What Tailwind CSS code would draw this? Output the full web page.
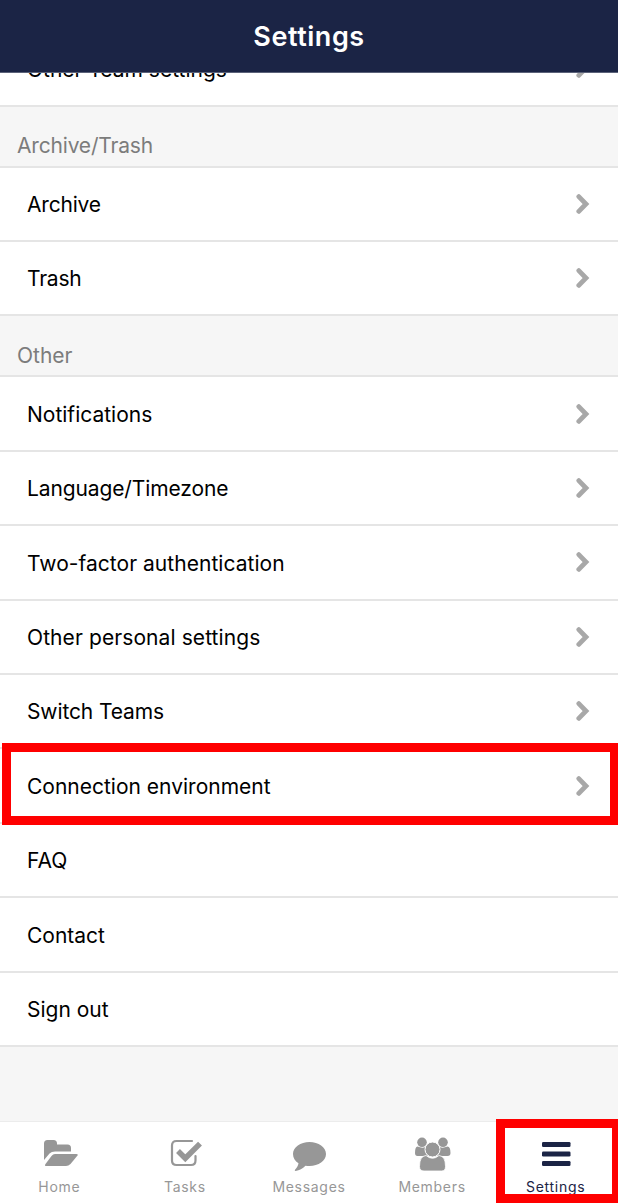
<!DOCTYPE html>
<html lang="en">
  <head>
    <meta charset="UTF-8" />
    <meta name="viewport" content="width=device-width, initial-scale=1.0" />
    <script src="https://cdn.jsdelivr.net/npm/@tailwindcss/browser@4"></script>
    <title>Settings</title>
  </head>
  <body class="bg-[#f6f6f6] font-['Inter',sans-serif] text-black">
    <!-- chevron shared by the list rows -->
    <svg class="hidden">
      <symbol id="chevron" viewBox="0 0 14 22">
        <path
          d="M2.800 2.600 L10 10 L2.800 17.400"
          fill="none"
          stroke="#a8a8a8"
          stroke-width="4.8"
          stroke-linecap="round"
        />
      </symbol>
    </svg>
    <div class="relative flex h-[1203px] w-[618px] flex-col overflow-hidden">
      <header
        class="z-10 flex h-[73px] shrink-0 items-center justify-center border-b border-[#5b6279] bg-[#1b2445] pt-0.5"
      >
        <h1 class="text-[27px] font-semibold tracking-[0.55px] text-white">Settings</h1>
      </header>

      <main class="-mt-[40.5px] flex grow flex-col text-[21px]">
        <div class="flex h-[74.5px] shrink-0 items-center justify-between border-b-2 border-[#e5e5e5] bg-white pt-px pr-7 pl-[27px]">
          Other Team settings
          <svg class="h-[22px] w-3.5"><use href="#chevron" /></svg>
        </div>
        <h2 class="flex h-[60.6px] shrink-0 items-end border-b-2 border-[#e5e5e5] pb-1 pl-[17px] tracking-[-0.18px] text-[#7c7c7c]">
          Archive/Trash
        </h2>
        <div class="flex h-[74.4px] shrink-0 items-center justify-between border-b-2 border-[#e5e5e5] bg-white pt-0.5 pr-7 pl-[27px]">
          <span class="tracking-[-0.2px]">Archive</span>
          <svg class="h-[22px] w-3.5"><use href="#chevron" /></svg>
        </div>
        <div class="flex h-[74.4px] shrink-0 items-center justify-between border-b-2 border-[#e5e5e5] bg-white pt-0.5 pr-7 pl-[27px]">
          <span class="tracking-[-0.2px]">Trash</span>
          <svg class="h-[22px] w-3.5"><use href="#chevron" /></svg>
        </div>
        <h2 class="flex h-[61px] shrink-0 items-end border-b-2 border-[#e5e5e5] pb-1 pl-[17px] text-[#7c7c7c]">
          Other
        </h2>
        <div class="flex h-[74.4px] shrink-0 items-center justify-between border-b-2 border-[#e5e5e5] bg-white pt-0.5 pr-7 pl-[27px]">
          Notifications
          <svg class="h-[22px] w-3.5"><use href="#chevron" /></svg>
        </div>
        <div class="flex h-[74.4px] shrink-0 items-center justify-between border-b-2 border-[#e5e5e5] bg-white pt-0.5 pr-7 pl-[27px]">
          <span class="tracking-[-0.12px]">Language/Timezone</span>
          <svg class="h-[22px] w-3.5"><use href="#chevron" /></svg>
        </div>
        <div class="flex h-[74.4px] shrink-0 items-center justify-between border-b-2 border-[#e5e5e5] bg-white pt-0.5 pr-7 pl-[27px]">
          <span class="tracking-[0.04px]">Two-factor authentication</span>
          <svg class="h-[22px] w-3.5"><use href="#chevron" /></svg>
        </div>
        <div class="flex h-[74.4px] shrink-0 items-center justify-between border-b-2 border-[#e5e5e5] bg-white pt-0.5 pr-7 pl-[27px]">
          <span class="tracking-[0.09px]">Other personal settings</span>
          <svg class="h-[22px] w-3.5"><use href="#chevron" /></svg>
        </div>
        <div class="flex h-[74.4px] shrink-0 items-center justify-between border-b-2 border-[#e5e5e5] bg-white pt-0.5 pr-7 pl-[27px]">
          <span class="tracking-[-0.12px]">Switch Teams</span>
          <svg class="h-[22px] w-3.5"><use href="#chevron" /></svg>
        </div>
        <div class="relative flex h-[74.4px] shrink-0 items-center justify-between border-b-2 border-[#e5e5e5] bg-white pt-0.5 pr-7 pl-[27px]">
          Connection environment
          <svg class="h-[22px] w-3.5"><use href="#chevron" /></svg>
          <div class="absolute -top-[6px] -right-px left-[2.4px] z-10 h-[82px] border-9 border-[#ff0000]"></div>
        </div>
        <div class="flex h-[74.4px] shrink-0 items-center border-b-2 border-[#e5e5e5] bg-white pt-0.5 pl-[27px]">
          FAQ
        </div>
        <div class="flex h-[74.4px] shrink-0 items-center border-b-2 border-[#e5e5e5] bg-white pt-0.5 pl-[27px]">
          Contact
        </div>
        <div class="flex h-[74.4px] shrink-0 items-center border-b-2 border-[#e5e5e5] bg-white pt-0.5 pl-[27px]">
          Sign out
        </div>
      </main>

      <nav
        class="relative grid h-[82px] shrink-0 grid-cols-5 border-t border-[#ececec] bg-white pt-3 text-center text-[14px] leading-[22px] tracking-[0.7px] text-[#979797]"
      >
        <a class="flex flex-col items-center pr-[5px]">
          <svg class="h-[42px] w-10" viewBox="0 0 40 42" fill="#979797">
            <path d="M5 26V9.500Q5 6 8.500 6H14.500Q18 6 18 9.500V10.500H28.500Q32 10.500 32 14V17.500H16Q12.500 17.500 10.500 19.500Z" />
            <path d="M16 20H37.500Q39.500 20 38.500 21.500L31.500 30Q29.500 32 27 32H7.500Q5 32 6.500 30L12.500 22Q14 20 16 20Z" />
          </svg>
          Home
        </a>
        <a class="flex flex-col items-center pr-px">
          <svg class="h-[42px] w-10" viewBox="0 0 40 42">
            <path d="M27 7H11.500Q7 7 7 11.500V26.500Q7 31 11.500 31H26Q30.500 31 30.500 26.500V22" fill="none" stroke="#979797" stroke-width="2.200" stroke-linecap="round" />
            <path d="M13 17L20.300 24.300L35 9.600" fill="none" stroke="#979797" stroke-width="5.500" />
          </svg>
          Tasks
        </a>
        <a class="flex flex-col items-center">
          <svg class="h-[42px] w-10" viewBox="0 0 40 42" fill="#979797">
            <path d="M20.500 8C29.500 8 37 13.200 37 20S29.500 32 20.500 32Q18.500 32 16.500 31.700C13.500 34.500 10.500 36.300 6.700 36.900C5.700 37 5.500 36 6.200 35.400C8.200 33.400 9 32 9.500 29.300C6 27.100 4 24 4 20C4 13.200 11.500 8 20.500 8Z" />
          </svg>
          Messages
        </a>
        <a class="flex flex-col items-center pr-px">
          <svg class="h-[42px] w-10" viewBox="0 0 40 42" fill="#979797">
            <circle cx="10" cy="8.300" r="4.800" />
            <circle cx="31" cy="8.300" r="4.800" />
            <path d="M5.500 12.500Q10 14.500 13.500 13Q12.500 18.500 16 22H5.500Q3 22 3 19Q3 12.500 5.500 12.500Z" />
            <path d="M35.500 12.500Q31 14.500 27.500 13Q28.500 18.500 25 22H35.500Q38.500 22 38.500 19Q38.500 12.500 35.500 12.500Z" />
            <path d="M14 21.500Q20.500 27 27 21.500Q33.500 22 33.500 32.500Q33.500 37 29.500 37H12Q7.500 37 7.500 32.500Q7.500 22 14 21.500Z" stroke="white" stroke-width="0.800" />
            <circle cx="20.500" cy="15.500" r="7.500" stroke="white" stroke-width="1" />
          </svg>
          Members
        </a>
        <a class="flex flex-col items-center pr-px text-[#1b2445]">
          <svg class="h-[42px] w-10" viewBox="0 0 40 42" fill="#1b2445">
            <rect x="6" y="8" width="28.500" height="5" rx="1.300" />
            <rect x="6" y="17.500" width="28.500" height="5" rx="1.300" />
            <rect x="6" y="27" width="28.500" height="5" rx="1.300" />
          </svg>
          Settings
        </a>
        <div class="absolute -top-[3px] -right-[3px] left-[496px] h-[84px] border-9 border-[#ff0000]"></div>
      </nav>
    </div>
  </body>
</html>
